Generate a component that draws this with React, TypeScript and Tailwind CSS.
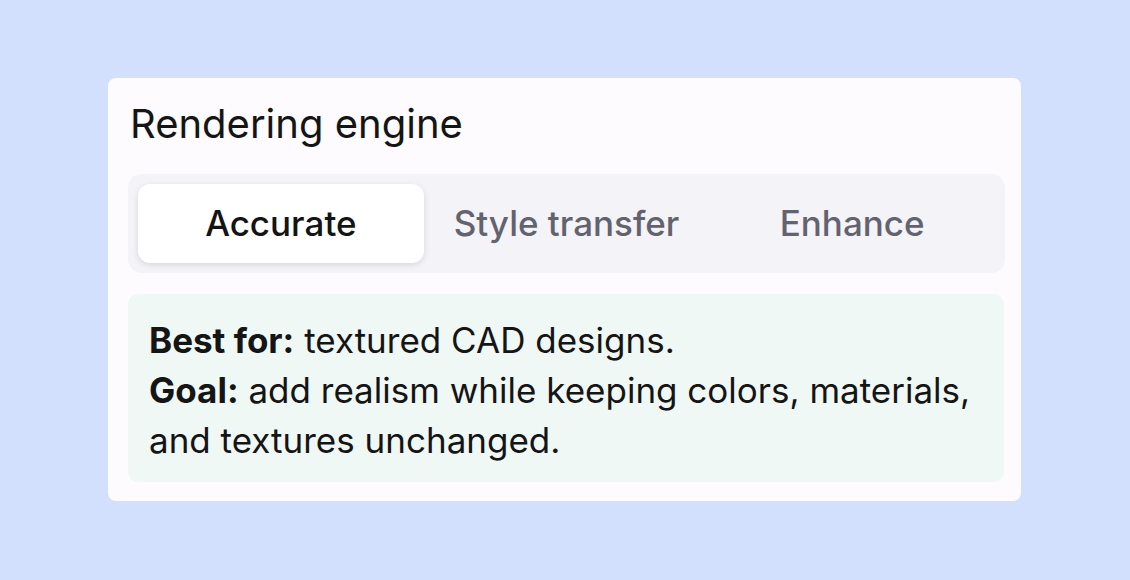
export default function App() {
  const tabs = ["Accurate", "Style transfer", "Enhance"];
  return (
    <div className="w-[1130px] h-[580px] bg-[#d3e0fd] flex items-start pt-[78px] pl-[108px]" style={{ fontFamily: "Inter, 'Noto Sans', sans-serif" }}>
      <div className="w-[913px] h-[423px] bg-[#fdfbfd] rounded-[8px] px-[20px] pt-[16px] flex flex-col">
        <div className="text-[40px] leading-[60px] text-[#151515] pl-[2px]">Rendering engine</div>
        <div className="mt-[20px] w-[877px] h-[99px] bg-[#f4f3f8] rounded-[14px] p-[10px] grid grid-cols-3">
          {tabs.map((t, i) => (
            <div
              key={t}
              className={
                i === 0
                  ? "flex items-center justify-center bg-white rounded-[12px] shadow-[0_2px_6px_rgba(0,0,0,0.12)] text-[35px] font-medium text-[#141414]"
                  : "flex items-center justify-center text-[35px] font-medium text-[#63636f]"
              }
            >
              {t}
            </div>
          ))}
        </div>
        <div className="mt-[21px] w-[876px] h-[188px] bg-[#f0f8f5] rounded-[10px] px-[21px] pt-[21px] text-[35px] leading-[50px] text-[#151515]">
          <p>
            <span className="font-bold">Best for:</span> textured CAD designs.
          </p>
          <p>
            <span className="font-bold">Goal:</span> add realism while keeping colors, materials, and textures unchanged.
          </p>
        </div>
      </div>
    </div>
  );
}
